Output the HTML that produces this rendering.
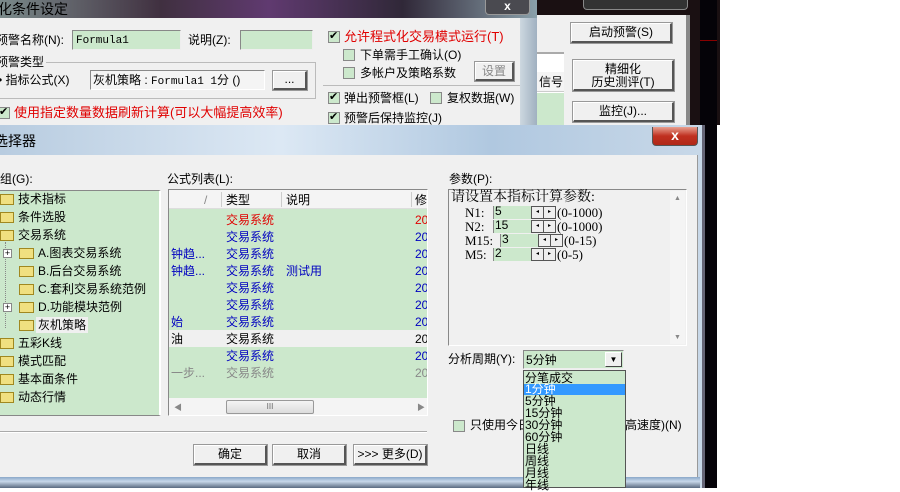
<!DOCTYPE html>
<html><head><meta charset="utf-8"><style>
*{margin:0;padding:0;box-sizing:border-box}
body{width:900px;height:488px;overflow:hidden;background:#fff;position:relative;font-family:"Liberation Sans","Noto Sans CJK SC","WenQuanYi Zen Hei",sans-serif;font-size:12px;color:#000}
div,span{position:absolute;white-space:nowrap}
.t{font-size:12px;line-height:14px}
.in{background:#cce8cc;border:1px solid #888;border-right-color:#eee;border-bottom-color:#eee}
.btn{background:#f0f0f0;border:1px solid #fff;border-right:2px solid #555;border-bottom:2px solid #555;box-shadow:0 0 0 1px #999;text-align:center;font-size:12px}
.cb{width:12px;height:12px;background:#cce8cc;border:1px solid #888}
.ck::after{content:"✔";position:absolute;left:0;top:-3px;font-size:11px;color:#000}
.fold{width:15px;height:11px;background:#f0e080;border:1px solid #a08820}
.red{color:#e00000}.blue{color:#0000c0}.gray{color:#888}
</style></head><body>
<div style="left:520px;top:0;width:200px;height:125px;background:#1a1012"></div>
<div style="left:537px;top:15px;width:152px;height:110px;background:#f0f0f0"></div>
<div style="left:686px;top:15px;width:4px;height:110px;background:#888"></div>
<div style="left:583px;top:0;width:105px;height:10px;background:#333;border:1px solid #888;border-top:none;border-radius:0 0 4px 4px"></div>
<div style="left:537px;top:52px;width:27px;height:73px;background:#fff;border-top:2px solid #aaa"></div>
<div style="left:537px;top:72px;width:27px;height:20px;background:#f4f4f4;border-bottom:1px solid #ccc" class="t"><span style="left:2px;top:3px">信号</span></div>
<div style="left:537px;top:93px;width:27px;height:32px;background:#cce8cc"></div>
<div class="btn" style="left:571px;top:23px;width:101px;height:20px;line-height:17px">启动预警(S)</div>
<div class="btn" style="left:573px;top:60px;width:101px;height:31px;line-height:13px;padding-top:2px">精细化<br>历史测评(T)</div>
<div class="btn" style="left:573px;top:102px;width:101px;height:20px;line-height:17px">监控(J)...</div>
<div style="left:700px;top:0;width:17px;height:488px;background:#050308"></div>
<div style="left:700px;top:40px;width:17px;height:1px;background:#800"></div>

<div style="left:0;top:0;width:537px;height:125px;background:#f0f0f0"></div>
<div style="left:0;top:0;width:537px;height:18px;background:linear-gradient(90deg,#7a8a8a,#403040 30%,#603a70 50%,#302838 75%,#8aa0aa)"></div>
<div style="left:-2px;top:1px;font-size:14px;line-height:16px">化条件设定</div>
<div style="left:485px;top:0;width:45px;height:15px;background:#4a4a50;border:1px solid #999;border-top:none;border-radius:0 0 4px 4px;color:#fff;text-align:center;font-size:12px;line-height:12px;font-weight:bold">x</div>
<div style="left:520px;top:18px;width:17px;height:107px;background:linear-gradient(90deg,#cdd8e0,#a0b0c0)"></div>
<div style="left:0;top:24px;width:520px;height:101px;background:#f0f0f0"></div>
<div class="t" style="left:-4px;top:33px">预警名称(N):</div>
<div class="in t" style="left:72px;top:30px;width:109px;height:20px;padding:3px;font-family:'Liberation Mono',monospace;font-size:11px">Formula1</div>
<div class="t" style="left:188px;top:33px">说明(Z):</div>
<div class="in" style="left:240px;top:30px;width:73px;height:20px"></div>
<div style="left:0;top:62px;width:316px;height:37px;border:1px solid #bbb;border-left:none"></div>
<div class="t" style="left:-4px;top:55px;background:#f0f0f0;padding-right:2px">预警类型</div>
<div class="t" style="left:-2px;top:73px">• 指标公式(X)</div>
<div class="t" style="left:90px;top:70px;width:175px;height:20px;border:1px solid #888;border-right-color:#fff;border-bottom-color:#fff;background:#f4f4f4;padding:2px 2px;font-size:12px">灰机策略 : <span style="position:static;font-family:'Liberation Mono',monospace;font-size:11px">Formula1 1</span>分 ()</div>
<div class="btn" style="left:273px;top:71px;width:34px;height:19px;line-height:14px">...</div>
<div class="cb ck" style="left:-2px;top:107px"></div>
<div class="t red" style="left:14px;top:106px;font-size:13px">使用指定数量数据刷新计算(可以大幅提高效率)</div>
<div class="cb ck" style="left:328px;top:31px"></div>
<div class="t red" style="left:344px;top:30px;font-size:13px">允许程式化交易模式运行(T)</div>
<div class="cb" style="left:343px;top:49px"></div><div class="t" style="left:360px;top:48px">下单需手工确认(O)</div>
<div class="cb" style="left:343px;top:67px"></div><div class="t" style="left:360px;top:66px">多帐户及策略系数</div>
<div class="btn gray" style="left:475px;top:62px;width:39px;height:19px;line-height:16px">设置</div>
<div style="left:323px;top:85px;width:197px;height:1px;background:#bbb"></div>
<div class="cb ck" style="left:328px;top:92px"></div><div class="t" style="left:344px;top:91px">弹出预警框(L)</div>
<div class="cb" style="left:430px;top:92px"></div><div class="t" style="left:447px;top:91px">复权数据(W)</div>
<div class="cb ck" style="left:328px;top:112px"></div><div class="t" style="left:344px;top:111px">预警后保持监控(J)</div>

<div style="left:0;top:125px;width:705px;height:363px;background:linear-gradient(90deg,#b8cce0,#dce8f4 40%,#b0c8e0 70%,#c8d8e8);border-right:3px solid #667"></div>
<div class="t" style="left:-6px;top:134px;font-size:14px">选择器</div>
<div style="left:652px;top:127px;width:46px;height:19px;background:linear-gradient(#e8a090,#c03020 50%,#b02818);border:1px solid #555;border-top:none;border-radius:0 0 4px 4px;color:#fff;text-align:center;font-weight:bold;line-height:16px;font-size:14px">x</div>
<div style="left:0;top:155px;width:698px;height:322px;background:#f0f0f0;border-right:1px solid #999"></div>
<div style="left:0;top:477px;width:700px;height:11px;background:linear-gradient(#8aa8c8,#c8d8ea 40%,#5a6a80)"></div>
<div class="t" style="left:0;top:172px">组(G):</div>
<div style="left:0;top:190px;width:161px;height:226px;background:#cce8cc;border:1px solid #888;border-left:none;border-right:2px solid #fff"></div>
<div class="fold" style="left:0;top:194px;width:14px"></div><div class="t" style="left:18px;top:192px">技术指标</div>
<div class="fold" style="left:0;top:212px;width:14px"></div><div class="t" style="left:18px;top:210px">条件选股</div>
<div class="fold" style="left:0;top:230px;width:14px"></div><div class="t" style="left:18px;top:228px">交易系统</div>
<div style="left:5px;top:242px;width:1px;height:86px;border-left:1px dotted #888"></div>
<div style="left:3px;top:249px;width:9px;height:9px;border:1px solid #888;background:#fff;font-size:9px;line-height:7px;text-align:center">+</div>
<div class="fold" style="left:19px;top:248px"></div><div class="t" style="left:38px;top:246px">A.图表交易系统</div>
<div class="fold" style="left:19px;top:266px"></div><div class="t" style="left:38px;top:264px">B.后台交易系统</div>
<div class="fold" style="left:19px;top:284px"></div><div class="t" style="left:38px;top:282px">C.套利交易系统范例</div>
<div style="left:3px;top:303px;width:9px;height:9px;border:1px solid #888;background:#fff;font-size:9px;line-height:7px;text-align:center">+</div>
<div class="fold" style="left:19px;top:302px"></div><div class="t" style="left:38px;top:300px">D.功能模块范例</div>
<div class="fold" style="left:19px;top:320px"></div><div class="t" style="left:36px;top:317px;background:#f0f0f0;padding:1px 2px">灰机策略</div>
<div class="fold" style="left:0;top:338px;width:14px"></div><div class="t" style="left:18px;top:336px">五彩K线</div>
<div class="fold" style="left:0;top:356px;width:14px"></div><div class="t" style="left:18px;top:354px">模式匹配</div>
<div class="fold" style="left:0;top:374px;width:14px"></div><div class="t" style="left:18px;top:372px">基本面条件</div>
<div class="fold" style="left:0;top:392px;width:14px"></div><div class="t" style="left:18px;top:390px">动态行情</div>

<div class="t" style="left:167px;top:172px">公式列表(L):</div>
<div style="left:168px;top:189px;width:260px;height:227px;background:#cce8cc;border:1px solid #888;border-right-color:#fff;border-bottom-color:#fff;overflow:hidden">
 <div style="left:0;top:0;width:260px;height:19px;background:#f4f4f4;border-bottom:1px solid #ddd"></div>
 <div class="t gray" style="left:35px;top:3px">/</div>
 <div style="left:52px;top:2px;width:1px;height:15px;background:#ccc"></div>
 <div class="t" style="left:57px;top:3px">类型</div>
 <div style="left:112px;top:2px;width:1px;height:15px;background:#ccc"></div>
 <div class="t" style="left:117px;top:3px">说明</div>
 <div style="left:242px;top:2px;width:1px;height:15px;background:#ccc"></div>
 <div class="t" style="left:246px;top:3px">修</div>
 <div class="t red" style="left:57px;top:23px">交易系统</div><div class="t red" style="left:246px;top:23px">20</div>
 <div class="t blue" style="left:57px;top:40px">交易系统</div><div class="t blue" style="left:246px;top:40px">20</div>
 <div class="t blue" style="left:2px;top:57px">钟趋...</div><div class="t blue" style="left:57px;top:57px">交易系统</div><div class="t blue" style="left:246px;top:57px">20</div>
 <div class="t blue" style="left:2px;top:74px">钟趋...</div><div class="t blue" style="left:57px;top:74px">交易系统</div><div class="t blue" style="left:117px;top:74px">测试用</div><div class="t blue" style="left:246px;top:74px">20</div>
 <div class="t blue" style="left:57px;top:91px">交易系统</div><div class="t blue" style="left:246px;top:91px">20</div>
 <div class="t blue" style="left:57px;top:108px">交易系统</div><div class="t blue" style="left:246px;top:108px">20</div>
 <div class="t blue" style="left:2px;top:125px">始</div><div class="t blue" style="left:57px;top:125px">交易系统</div><div class="t blue" style="left:246px;top:125px">20</div>
 <div style="left:0;top:140px;width:260px;height:17px;background:#f0f0f0"></div>
 <div class="t" style="left:2px;top:142px">油</div><div class="t" style="left:57px;top:142px">交易系统</div><div class="t" style="left:246px;top:142px">20</div>
 <div class="t blue" style="left:57px;top:159px">交易系统</div><div class="t blue" style="left:246px;top:159px">20</div>
 <div class="t gray" style="left:2px;top:176px">一步...</div><div class="t gray" style="left:57px;top:176px">交易系统</div><div class="t gray" style="left:246px;top:176px">20</div>
 <div style="left:0;top:208px;width:260px;height:18px;background:#f4f4f4"></div>
 <div class="t gray" style="left:5px;top:211px;font-size:8px">◀</div>
 <div style="left:57px;top:210px;width:88px;height:14px;background:linear-gradient(#f4f4f4,#dcdcdc);border:1px solid #999;border-radius:2px;text-align:center;font-size:8px;line-height:12px;color:#666">III</div>
 <div class="t gray" style="left:248px;top:211px;font-size:8px">▶</div>
</div>
<div style="left:0;top:431px;width:427px;height:2px;border-top:1px solid #aaa;border-bottom:1px solid #fff"></div>
<div class="btn" style="left:194px;top:445px;width:73px;height:20px;line-height:17px">确定</div>
<div class="btn" style="left:273px;top:445px;width:73px;height:20px;line-height:17px">取消</div>
<div class="btn" style="left:354px;top:445px;width:73px;height:20px;line-height:17px">&gt;&gt;&gt; 更多(D)</div>

<div class="t" style="left:449px;top:172px">参数(P):</div>
<div style="left:448px;top:189px;width:239px;height:157px;background:#f0f0f0;border:1px solid #888;border-right-color:#fff;border-bottom-color:#fff"></div>
<div style="left:670px;top:191px;width:15px;height:153px;background:#f4f4f4"></div>
<div class="gray" style="left:674px;top:195px;font-size:7px">▲</div><div class="gray" style="left:674px;top:334px;font-size:7px">▼</div>
<div style="left:451px;top:191px;font-size:14px;line-height:14px;font-family:'Liberation Serif','Noto Serif CJK SC',serif">请设置本指标计算参数:</div>
<div style="left:465px;top:206px;font-family:'Liberation Serif',serif;font-size:13px;line-height:13px">N1:</div>
<div class="in t" style="left:493px;top:206px;width:38px;height:13px;line-height:11px;padding-left:1px;border:none;border-left:1px solid #888">5</div>
<div style="left:531px;top:206px;width:25px;height:13px;background:#555;padding:1px"><span style="left:1px;top:1px;width:11px;height:11px;background:#eee;font-size:6px;text-align:center;line-height:11px">◂</span><span style="left:13px;top:1px;width:11px;height:11px;background:#eee;font-size:6px;text-align:center;line-height:11px">▸</span></div>
<div style="left:557px;top:206px;font-family:'Liberation Serif',serif;font-size:13px;line-height:13px">(0-1000)</div>
<div style="left:465px;top:220px;font-family:'Liberation Serif',serif;font-size:13px;line-height:13px">N2:</div>
<div class="in t" style="left:493px;top:220px;width:38px;height:13px;line-height:11px;padding-left:1px;border:none;border-left:1px solid #888">15</div>
<div style="left:531px;top:220px;width:25px;height:13px;background:#555"><span style="left:1px;top:1px;width:11px;height:11px;background:#eee;font-size:6px;text-align:center;line-height:11px">◂</span><span style="left:13px;top:1px;width:11px;height:11px;background:#eee;font-size:6px;text-align:center;line-height:11px">▸</span></div>
<div style="left:557px;top:220px;font-family:'Liberation Serif',serif;font-size:13px;line-height:13px">(0-1000)</div>
<div style="left:465px;top:234px;font-family:'Liberation Serif',serif;font-size:13px;line-height:13px">M15:</div>
<div class="in t" style="left:500px;top:234px;width:38px;height:13px;line-height:11px;padding-left:1px;border:none;border-left:1px solid #888">3</div>
<div style="left:538px;top:234px;width:25px;height:13px;background:#555"><span style="left:1px;top:1px;width:11px;height:11px;background:#eee;font-size:6px;text-align:center;line-height:11px">◂</span><span style="left:13px;top:1px;width:11px;height:11px;background:#eee;font-size:6px;text-align:center;line-height:11px">▸</span></div>
<div style="left:564px;top:234px;font-family:'Liberation Serif',serif;font-size:13px;line-height:13px">(0-15)</div>
<div style="left:465px;top:248px;font-family:'Liberation Serif',serif;font-size:13px;line-height:13px">M5:</div>
<div class="in t" style="left:493px;top:248px;width:38px;height:13px;line-height:11px;padding-left:1px;border:none;border-left:1px solid #888">2</div>
<div style="left:531px;top:248px;width:25px;height:13px;background:#555"><span style="left:1px;top:1px;width:11px;height:11px;background:#eee;font-size:6px;text-align:center;line-height:11px">◂</span><span style="left:13px;top:1px;width:11px;height:11px;background:#eee;font-size:6px;text-align:center;line-height:11px">▸</span></div>
<div style="left:557px;top:248px;font-family:'Liberation Serif',serif;font-size:13px;line-height:13px">(0-5)</div>

<div class="t" style="left:448px;top:352px">分析周期(Y):</div>
<div class="in t" style="left:523px;top:350px;width:101px;height:19px;padding:2px 2px">5分钟</div>
<div style="left:605px;top:352px;width:17px;height:15px;background:#f0f0f0;border:1px solid #fff;border-right-color:#444;border-bottom-color:#444;font-size:8px;text-align:center;line-height:13px">▼</div>
<div class="cb" style="left:453px;top:420px"></div>
<div class="t" style="left:470px;top:418px">只使用今日</div>
<div class="t" style="left:625px;top:418px">高速度)(N)</div>
<div style="left:523px;top:370px;width:103px;height:118px;background:#cce8cc;border:1px solid #555;font-size:12px;line-height:12px">
 <div style="left:1px;top:1px">分笔成交</div>
 <div style="left:0;top:13px;width:101px;height:11px;background:#3399ff"></div>
 <div style="left:1px;top:12px;color:#fff">1分钟</div>
 <div style="left:1px;top:24px">5分钟</div>
 <div style="left:1px;top:36px">15分钟</div>
 <div style="left:1px;top:48px">30分钟</div>
 <div style="left:1px;top:60px">60分钟</div>
 <div style="left:1px;top:72px">日线</div>
 <div style="left:1px;top:84px">周线</div>
 <div style="left:1px;top:96px">月线</div>
 <div style="left:1px;top:108px">年线</div>
</div>
</body></html>
